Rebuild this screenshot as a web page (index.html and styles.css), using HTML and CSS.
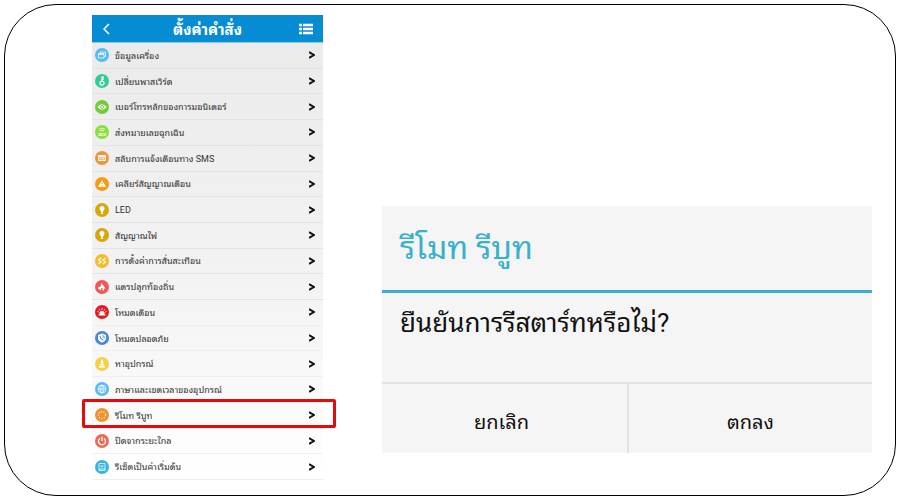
FILE: index.html
```html
<!DOCTYPE html>
<html lang="th">
<head>
    <meta charset="UTF-8">
    <meta name="viewport" content="width=device-width, initial-scale=1.0">
    <title>ตั้งค่าคำสั่ง</title>
    <link rel="stylesheet" href="styles.css">
</head>
<body>
    <main class="frame">
        <section class="phone">
            <header class="topbar">
                <button class="bar-btn" aria-label="กลับ">
                    <svg class="back" viewBox="0 0 8 12"><path d="M7 1 2 6l5 5"/></svg>
                </button>
                <h1>ตั้งค่าคำสั่ง</h1>
                <button class="bar-btn" aria-label="เมนู">
                    <svg class="menu" viewBox="0 0 14 12"><path d="M0 2h3M4 2h10M0 6h3M4 6h10M0 10h3M4 10h10"/></svg>
                </button>
            </header>
            <ul class="list">
                <li><a href="#">
                    <svg class="icon sky" viewBox="0 0 28 28"><path class="line" d="M10 11V8h11v9h-3M7 11h11v9H7zM7 13h11"/></svg>
                    <span>ข้อมูลเครื่อง</span><svg class="arrow" viewBox="0 0 6 8"><path d="M0 1 5 4 0 7"/></svg></a></li>
                <li><a href="#">
                    <svg class="icon teal" viewBox="0 0 28 28"><path class="thick" d="M14 5v10M14 6h4M14 10h4"/><circle class="thick" cx="14" cy="18" r="4"/></svg>
                    <span>เปลี่ยนพาสเวิร์ด</span><svg class="arrow" viewBox="0 0 6 8"><path d="M0 1 5 4 0 7"/></svg></a></li>
                <li><a href="#">
                    <svg class="icon green" viewBox="0 0 28 28"><path class="fill" d="M5 14q9-11 18 0-9 11-18 0z"/><circle class="cut" cx="14" cy="14" r="3"/></svg>
                    <span>เบอร์โทรหลักของการมอนิเตอร์</span><svg class="arrow" viewBox="0 0 6 8"><path d="M0 1 5 4 0 7"/></svg></a></li>
                <li><a href="#">
                    <svg class="icon lime" viewBox="0 0 28 28"><path class="line" d="M8 9q6-5 12 0M10 12q4-3 8 0"/><text class="sos" x="14" y="21">SOS</text></svg>
                    <span>ส่งหมายเลขฉุกเฉิน</span><svg class="arrow" viewBox="0 0 6 8"><path d="M0 1 5 4 0 7"/></svg></a></li>
                <li><a href="#">
                    <svg class="icon orange" viewBox="0 0 28 28"><rect class="fill" x="6" y="8" width="16" height="12" rx="2"/><text class="sos orange-text" x="14" y="17">SOS</text></svg>
                    <span>สลับการแจ้งเตือนทาง SMS</span><svg class="arrow" viewBox="0 0 6 8"><path d="M0 1 5 4 0 7"/></svg></a></li>
                <li><a href="#">
                    <svg class="icon amber" viewBox="0 0 28 28"><path class="fill" d="M14 6l8 14H6z"/><path class="cut-line" d="M14 11v4M14 17v2"/></svg>
                    <span>เคลียร์สัญญาณเตือน</span><svg class="arrow" viewBox="0 0 6 8"><path d="M0 1 5 4 0 7"/></svg></a></li>
                <li><a href="#">
                    <svg class="icon gold" viewBox="0 0 28 28"><path class="fill" d="M14 6a5 5 0 0 1 5 5c0 3-3 4-3 7h-4c0-3-3-4-3-7a5 5 0 0 1 5-5zM12 19h4v3h-4z"/></svg>
                    <span>LED</span><svg class="arrow" viewBox="0 0 6 8"><path d="M0 1 5 4 0 7"/></svg></a></li>
                <li><a href="#">
                    <svg class="icon gold" viewBox="0 0 28 28"><path class="fill" d="M14 6a5 5 0 0 1 5 5c0 3-3 4-3 7h-4c0-3-3-4-3-7a5 5 0 0 1 5-5zM12 19h4v3h-4z"/></svg>
                    <span>สัญญาณไฟ</span><svg class="arrow" viewBox="0 0 6 8"><path d="M0 1 5 4 0 7"/></svg></a></li>
                <li><a href="#">
                    <svg class="icon yellow" viewBox="0 0 28 28"><path class="thick" d="M12 8l-5 4 5 4-5 4M21 8l-5 4 5 4-5 4"/></svg>
                    <span>การตั้งค่าการสั่นสะเทือน</span><svg class="arrow" viewBox="0 0 6 8"><path d="M0 1 5 4 0 7"/></svg></a></li>
                <li><a href="#">
                    <svg class="icon coral" viewBox="0 0 28 28"><path class="fill" d="M13 6l8 11-7-1-7 3-1-4 5-2zM14 17l4-1v5h-2zM9 18l3-1v4z"/></svg>
                    <span>แตรปลุกท้องถิ่น</span><svg class="arrow" viewBox="0 0 6 8"><path d="M0 1 5 4 0 7"/></svg></a></li>
                <li><a href="#">
                    <svg class="icon red" viewBox="0 0 28 28"><path class="fill" d="M9 19v-4q0-3 5-3t5 3v4h2v2H7v-2z"/><path class="line" d="M14 6v4M8 8l2 3M20 8l-2 3M5 13l3 1M23 13l-3 1"/></svg>
                    <span>โหมดเตือน</span><svg class="arrow" viewBox="0 0 6 8"><path d="M0 1 5 4 0 7"/></svg></a></li>
                <li><a href="#">
                    <svg class="icon blue" viewBox="0 0 28 28"><path class="fill" d="M14 5l8 3v6q0 6-8 9-8-3-8-9V8z"/><path class="cut-line" d="M10 10q0 7 7 8M15 9q4 1 4 5M15 12q1 0 1 2"/></svg>
                    <span>โหมดปลอดภัย</span><svg class="arrow" viewBox="0 0 6 8"><path d="M0 1 5 4 0 7"/></svg></a></li>
                <li><a href="#">
                    <svg class="icon lemon" viewBox="0 0 28 28"><path class="fill" d="M13 5h2l2 7h-6zM11 13h6l1 4h-8zM8 18h12v3H8z"/></svg>
                    <span>หาอุปกรณ์</span><svg class="arrow" viewBox="0 0 6 8"><path d="M0 1 5 4 0 7"/></svg></a></li>
                <li><a href="#">
                    <svg class="icon sky" viewBox="0 0 28 28"><circle class="line" cx="14" cy="14" r="8"/><ellipse class="line" cx="14" cy="14" rx="4" ry="8"/><path class="line" d="M6 14h16M14 6v16"/></svg>
                    <span>ภาษาและเขตเวลาของอุปกรณ์</span><svg class="arrow" viewBox="0 0 6 8"><path d="M0 1 5 4 0 7"/></svg></a></li>
                <li class="marked"><a href="#">
                    <svg class="icon tangerine" viewBox="0 0 28 28"><circle class="dots" cx="14" cy="14" r="7"/></svg>
                    <span>รีโมท รีบูท</span><svg class="arrow" viewBox="0 0 6 8"><path d="M0 1 5 4 0 7"/></svg></a></li>
                <li><a href="#">
                    <svg class="icon salmon" viewBox="0 0 28 28"><path class="thick" d="M10 9a7 7 0 1 0 8 0M14 6v8"/></svg>
                    <span>ปิดจากระยะไกล</span><svg class="arrow" viewBox="0 0 6 8"><path d="M0 1 5 4 0 7"/></svg></a></li>
                <li><a href="#">
                    <svg class="icon cyan" viewBox="0 0 28 28"><path class="line" d="M8 7h12v14H8zM8 18h12M11 10l3 4 3-4M14 14v1"/></svg>
                    <span>รีเซ็ตเป็นค่าเริ่มต้น</span><svg class="arrow" viewBox="0 0 6 8"><path d="M0 1 5 4 0 7"/></svg></a></li>
            </ul>
        </section>

        <section class="dialog" role="dialog" aria-labelledby="dialogTitle">
            <h2 id="dialogTitle">รีโมท รีบูท</h2>
            <p>ยืนยันการรีสตาร์ทหรือไม่?</p>
            <div class="actions">
                <button>ยกเลิก</button>
                <button>ตกลง</button>
            </div>
        </section>
    </main>
</body>
</html>
```
FILE: styles.css
```css
* {
    box-sizing: border-box;
}
body {
    margin: 0;
    background-color: white;
    font-family: Roboto, "Noto Sans Thai Looped", "Noto Looped Thai", Loma, Waree, Garuda, "Noto Sans Thai", sans-serif;
}
button {
    border: none;
    background: none;
    padding: 0;
    font-family: inherit;
    color: inherit;
    cursor: pointer;
}
.frame {
    display: flex;
    gap: 59px;
    height: calc(100vh - 8px);
    min-height: 480px;
    margin: 4px;
    padding: 10px 23px 15px 87px;
    border: 1px solid black;
    border-radius: 52px;
}

/* Settings list */
.phone {
    flex: 0 0 231px;
    display: flex;
    flex-direction: column;
}
.topbar {
    flex: 0 0 28px;
    display: flex;
    align-items: center;
    justify-content: space-between;
    padding: 0 10px;
    background-color: #068cd3;
    border-bottom: 1px solid #8ccbea;
    color: white;
}
.topbar h1 {
    margin: 0;
    padding-top: 2px;
    font-size: 15px;
    line-height: 24px;
}
.bar-btn {
    display: flex;
}
.bar-btn svg {
    fill: none;
    stroke: white;
}
.bar-btn .back {
    width: 8px;
    height: 12px;
    margin-right: 6px;
    stroke-width: 1.5;
}
.bar-btn .menu {
    width: 14px;
    height: 12px;
    stroke-width: 2.5;
}
.list {
    flex: 1;
    display: flex;
    flex-direction: column;
    margin: 0;
    padding: 0;
    list-style: none;
    background: linear-gradient(#ebebeb, #f3f3f3 55%, #ffffff);
}
.list li {
    flex: 1 1 0;
    position: relative;
    border-bottom: 1px solid #e3e3e3;
}
.list li:nth-child(n+11) {
    border-color: #efefef;
}
.list a {
    display: flex;
    align-items: center;
    height: 100%;
    padding: 0 8px 0 3px;
    color: #333;
    font-size: 9px;
    line-height: 16px;
    text-decoration: none;
}
.list span {
    flex: 1;
    margin-left: 6px;
    padding-top: 1px;
    white-space: nowrap;
}
.arrow {
    width: 6px;
    height: 8px;
    fill: none;
    stroke: #111;
    stroke-width: 2;
}
.marked::after {
    content: "";
    position: absolute;
    top: -4px;
    right: -13px;
    bottom: 0;
    left: -10px;
    border: 3px solid #e60b0b;
    border-radius: 2px;
}

/* Round icons */
.icon {
    width: 14px;
    height: 14px;
    border-radius: 50%;
    background-color: currentColor;
}
.fill {
    fill: white;
}
.line, .thick {
    fill: none;
    stroke: white;
    stroke-width: 1.5;
}
.thick {
    stroke-width: 2.5;
}
.dots {
    fill: none;
    stroke: white;
    stroke-width: 2.5;
    stroke-dasharray: 2 3;
}
.cut {
    fill: white;
    stroke: currentColor;
    stroke-width: 2;
}
.cut-line {
    fill: none;
    stroke: currentColor;
    stroke-width: 2;
}
.sos {
    fill: white;
    font-size: 8px;
    font-weight: bold;
    text-anchor: middle;
}
.orange-text {
    fill: currentColor;
    font-size: 7px;
}
.sky { color: #59b9f2; }
.teal { color: #32cb98; }
.green { color: #73cb3b; }
.lime { color: #8fdd43; }
.orange { color: #f29339; }
.amber { color: #f79c12; }
.gold { color: #d7a80d; }
.yellow { color: #f4bc28; }
.coral { color: #f25757; }
.red { color: #e21c25; }
.blue { color: #4b85da; }
.lemon { color: #f4d14b; }
.tangerine { color: #f1912c; }
.salmon { color: #eb6c55; }
.cyan { color: #37b5dc; }

/* Confirm dialog */
.dialog {
    flex: 1;
    align-self: flex-end;
    margin-bottom: 27px;
    background-color: #f5f5f5;
    color: #111;
}
.dialog h2 {
    margin: 0;
    padding: 18px 18px 18px;
    border-bottom: 3px solid #39b0cd;
    color: #39b0cd;
    font-size: 32px;
    font-weight: normal;
    line-height: 48px;
}
.dialog p {
    margin: 0;
    padding: 10px 18px 39px;
    font-size: 26px;
    line-height: 40px;
}
.actions {
    display: grid;
    grid-template-columns: 1fr 1fr;
    border-top: 2px solid #e3e3e3;
}
.actions button {
    padding: 22px 6px 15px 0;
    font-size: 20px;
    line-height: 32px;
}
.actions button + button {
    padding-right: 0;
    border-left: 2px solid #e3e3e3;
}
```
